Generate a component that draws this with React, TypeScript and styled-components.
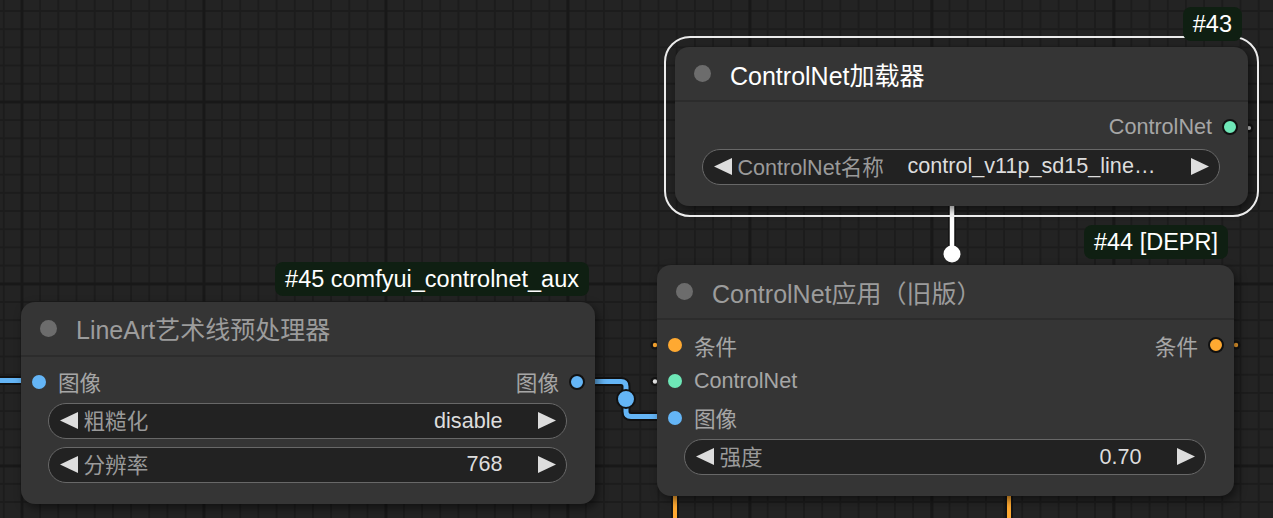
import React from "react";
import styled, { createGlobalStyle, css } from "styled-components";

const GlobalStyle = createGlobalStyle`
  html, body { margin: 0; padding: 0; background: #232323; }
  body { font-family: "Liberation Sans", "Noto Sans CJK SC", sans-serif; }
`;

const Canvas = styled.div`
  position: relative;
  width: 1273px;
  height: 518px;
  overflow: hidden;
  background-color: #232323;
  background-image:
    linear-gradient(to right, #181818 3px, transparent 3px),
    linear-gradient(to bottom, #181818 3px, transparent 3px),
    linear-gradient(to right, #1c1c1c 2px, transparent 2px),
    linear-gradient(to bottom, #1c1c1c 2px, transparent 2px);
  background-size: 182px 182px, 182px 182px, 18.2px 18.2px, 18.2px 18.2px;
  background-position: 20.5px 0, 0 100.5px, 2.8px 0, 0 10px;
`;

const Wires = styled.svg`
  position: absolute;
  left: 0;
  top: 0;
  width: 1273px;
  height: 518px;
  z-index: 1;
  pointer-events: none;
`;

const NodeBox = styled.div<{ $x: number; $y: number; $w: number; $selected?: boolean }>`
  position: absolute;
  left: ${(p) => p.$x}px;
  top: ${(p) => p.$y}px;
  width: ${(p) => p.$w}px;
  background: #353535;
  border-radius: 14px;
  box-shadow: 3px 4px 10px rgba(0, 0, 0, 0.5);
  z-index: 2;
  ${(p) =>
    p.$selected &&
    css`
      &::before {
        content: "";
        position: absolute;
        inset: -11px;
        border: 2px solid #ececec;
        border-radius: 26px;
        pointer-events: none;
      }
    `}
`;

const Badge = styled.div`
  position: absolute;
  right: 6px;
  bottom: calc(100% + 6px);
  height: 34px;
  padding: 0 10px;
  border-radius: 8px;
  background: #0f1f12;
  color: #ffffff;
  font-size: 23.5px;
  line-height: 34px;
  white-space: nowrap;
  z-index: 3;
`;

const TitleBar = styled.div<{ $selected?: boolean }>`
  height: 53px;
  display: flex;
  align-items: center;
  padding-left: 18.5px;
  border-bottom: 2px solid #2c2c2c;
  font-size: 25px;
  color: ${(p) => (p.$selected ? "#ffffff" : "#9c9c9c")};
  white-space: nowrap;
`;

const TitleDot = styled.span`
  flex: none;
  width: 17px;
  height: 17px;
  border-radius: 50%;
  background: #6c6c6c;
  margin-right: 19.5px;
`;

const Body = styled.div`
  padding: 7px 0 21px;
`;

const SlotRow = styled.div`
  height: 36.3px;
  display: flex;
  align-items: center;
  font-size: 21.6px;
  color: #a6a6a6;
  white-space: nowrap;
`;

const InSlot = styled.div`
  display: flex;
  align-items: center;
  gap: 12px;
  padding-left: 11px;
`;

const OutSlot = styled.div`
  display: flex;
  align-items: center;
  gap: 10px;
  padding-right: 10px;
  margin-left: auto;
`;

const InDot = styled.span<{ $c: string }>`
  flex: none;
  width: 14px;
  height: 14px;
  border-radius: 50%;
  background: ${(p) => p.$c};
`;

const OutDot = styled.span<{ $c: string }>`
  flex: none;
  width: 12px;
  height: 12px;
  border-radius: 50%;
  border: 2px solid #111;
  background: ${(p) => p.$c};
`;

const Widgets = styled.div`
  display: flex;
  flex-direction: column;
  gap: 7.2px;
  margin-top: 3.6px;
  padding: 0 28px 0 27px;
`;

const Widget = styled.div`
  box-sizing: border-box;
  height: 36px;
  display: flex;
  align-items: center;
  padding-bottom: 1px;
  border: 1.5px solid #686868;
  border-radius: 18px;
  background: #222222;
  font-size: 21.6px;
  white-space: nowrap;
  overflow: hidden;
`;

const Arrow = styled.svg<{ $side: "l" | "r" }>`
  flex: none;
  width: 18px;
  height: 17px;
  ${(p) =>
    p.$side === "l"
      ? css`
          margin-left: 10.5px;
        `
      : css`
          margin-left: 35px;
          margin-right: 10.5px;
        `}
`;

const WLabel = styled.span`
  margin-left: 6px;
  margin-bottom: 2px;
  color: #9a9a9a;
`;

const WValue = styled.span`
  margin-left: auto;
  color: #dddddd;
`;

const C_ORANGE = "#ffa931";
const C_GREEN = "#6ee7b7";
const C_BLUE = "#64b5f6";

type Slot = { label: string; color: string };
type Row = { input?: Slot; output?: Slot };
type W = { label: string; value: string };

const LeftArrow = () => (
  <Arrow $side="l" viewBox="0 0 18 17">
    <polygon points="0,8.5 18,0 18,17" fill="#dddddd" />
  </Arrow>
);
const RightArrow = () => (
  <Arrow $side="r" viewBox="0 0 18 17">
    <polygon points="18,8.5 0,0 0,17" fill="#dddddd" />
  </Arrow>
);

function GraphNode(props: {
  x: number;
  y: number;
  w: number;
  title: string;
  badge: string;
  selected?: boolean;
  rows: Row[];
  widgets: W[];
}) {
  return (
    <NodeBox $x={props.x} $y={props.y} $w={props.w} $selected={props.selected}>
      <Badge>{props.badge}</Badge>
      <TitleBar $selected={props.selected}>
        <TitleDot />
        {props.title}
      </TitleBar>
      <Body>
        {props.rows.map((r, i) => (
          <SlotRow key={i}>
            {r.input && (
              <InSlot>
                <InDot $c={r.input.color} />
                {r.input.label}
              </InSlot>
            )}
            {r.output && (
              <OutSlot>
                {r.output.label}
                <OutDot $c={r.output.color} />
              </OutSlot>
            )}
          </SlotRow>
        ))}
        <Widgets>
          {props.widgets.map((w, i) => (
            <Widget key={i}>
              <LeftArrow />
              <WLabel>{w.label}</WLabel>
              <WValue>{w.value}</WValue>
              <RightArrow />
            </Widget>
          ))}
        </Widgets>
      </Body>
    </NodeBox>
  );
}

export default function App() {
  return (
    <>
      <GlobalStyle />
      <Canvas>
        <Wires viewBox="0 0 1273 518">
          {/* left image wire into LineArt */}
          <path d="M-5,380.5 H26" stroke="#111" strokeWidth="9" fill="none" />
          <path d="M-5,380.5 H26" stroke={C_BLUE} strokeWidth="5" fill="none" />
          {/* LineArt image out -> ControlNet apply image in */}
          <path
            d="M588,381.5 H621 Q626,381.5 626,386.5 V411.5 Q626,416.5 631,416.5 H662"
            stroke="#111"
            strokeWidth="9"
            fill="none"
          />
          <path
            d="M588,381.5 H621 Q626,381.5 626,386.5 V411.5 Q626,416.5 631,416.5 H662"
            stroke={C_BLUE}
            strokeWidth="5"
            fill="none"
          />
          <circle cx="626" cy="399" r="9" fill={C_BLUE} stroke="#111" strokeWidth="2" />
          {/* controlnet loader -> apply */}
          <path d="M952,200 V254" stroke="#151515" strokeWidth="8" fill="none" />
          <path d="M952,200 V254" stroke="#ffffff" strokeWidth="4.5" fill="none" />
          <circle cx="952" cy="254" r="8.5" fill="#ffffff" />
          {/* orange conditioning wires */}
          <path d="M675,490 V525" stroke="#151515" strokeWidth="8" fill="none" />
          <path d="M675,490 V525" stroke={C_ORANGE} strokeWidth="4" fill="none" />
          <path d="M1009,490 V525" stroke="#151515" strokeWidth="8" fill="none" />
          <path d="M1009,490 V525" stroke={C_ORANGE} strokeWidth="4" fill="none" />
          {/* link end points */}
          <circle cx="1249" cy="128" r="4.5" fill="#141414" />
          <circle cx="1249" cy="128" r="2" fill="#dddddd" />
          <circle cx="1236" cy="345" r="4.5" fill="#141414" />
          <circle cx="1236" cy="345" r="2.2" fill={C_ORANGE} />
          <circle cx="655" cy="345" r="4.5" fill="#141414" />
          <circle cx="655" cy="345" r="2.2" fill={C_ORANGE} />
          <circle cx="655" cy="381.5" r="4.5" fill="#141414" />
          <circle cx="655" cy="381.5" r="2.2" fill="#eeeeee" />
        </Wires>

        <GraphNode
          x={675}
          y={47}
          w={573}
          selected
          badge="#43"
          title="ControlNet加载器"
          rows={[{ output: { label: "ControlNet", color: C_GREEN } }]}
          widgets={[{ label: "ControlNet名称", value: "control_v11p_sd15_line…" }]}
        />

        <GraphNode
          x={657}
          y={265}
          w={577}
          badge="#44 [DEPR]"
          title="ControlNet应用（旧版）"
          rows={[
            { input: { label: "条件", color: C_ORANGE }, output: { label: "条件", color: C_ORANGE } },
            { input: { label: "ControlNet", color: C_GREEN } },
            { input: { label: "图像", color: C_BLUE } },
          ]}
          widgets={[{ label: "强度", value: "0.70" }]}
        />

        <GraphNode
          x={21}
          y={301.5}
          w={574}
          badge="#45 comfyui_controlnet_aux"
          title="LineArt艺术线预处理器"
          rows={[
            { input: { label: "图像", color: C_BLUE }, output: { label: "图像", color: C_BLUE } },
          ]}
          widgets={[
            { label: "粗糙化", value: "disable" },
            { label: "分辨率", value: "768" },
          ]}
        />
      </Canvas>
    </>
  );
}
